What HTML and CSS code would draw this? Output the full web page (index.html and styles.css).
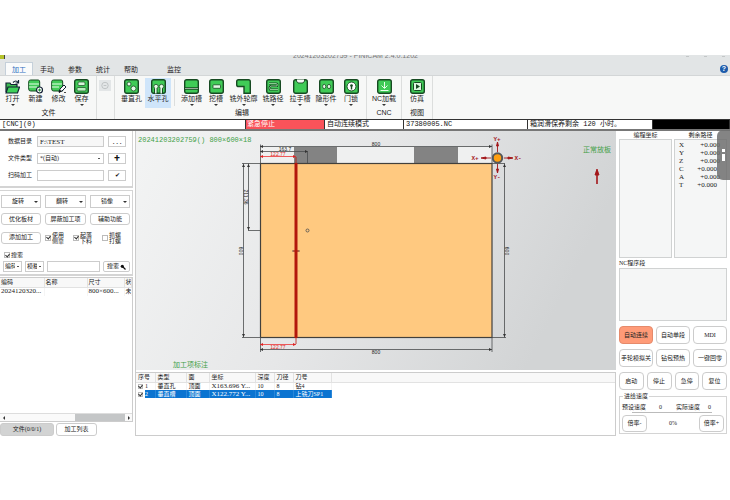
FILE: index.html
```html
<!DOCTYPE html>
<html lang="zh-CN">
<head>
<meta charset="utf-8">
<title>PINICAM</title>
<link rel="stylesheet" href="styles.css">
</head>
<body>
<div class="app">
  <header class="titlebar">
    <span class="logo"></span>
    <div class="title">20241203202759 - PINICAM 2.4.0.1202</div>
    <div class="window-marks"><i></i><i></i><i></i></div>
    <nav class="tabs">
      <a href="#" class="active">加工</a><a href="#">手动</a><a href="#">参数</a><a href="#">统计</a><a href="#">帮助</a><a href="#" class="far">监控</a>
      <button class="help" aria-label="帮助">?</button>
    </nav>
  </header>

  <section class="ribbon">
    <div class="group g-file">
      <div class="tools">
        <button><svg class="ic" viewBox="0 0 15 15"><path d="M1 13V4h4l1 1.500h6V8" fill="#3dbb52" stroke="#123" stroke-width="1.200"/><path d="M1 14l2-6h11.500l-2 6z" fill="#3fd05a" stroke="#123" stroke-width="1.200"/><path d="M8 3.500q3-3 5 0M13.500 1v3h-3" fill="none" stroke="#123" stroke-width="1.200"/></svg>打开<b></b></button>
        <button><svg class="ic" viewBox="0 0 15 15"><path d="M.7 2.500q0-1.500 2-1.500h7.500q1.500 0 1.500 2v9H2.700q-2 0-2-2z" fill="#42cb58" stroke="#174a22"/><path d="M1 5h10M1 8h8" stroke="#e8ffe9"/><circle cx="11.500" cy="11" r="3" fill="#fff" stroke="#123" stroke-width="1.200"/><path d="M10 11h3M11.500 9.500v3" stroke="#27913a"/></svg>新建</button>
        <button><svg class="ic" viewBox="0 0 15 15"><path d="M.7 2.500q0-1.500 2-1.500h7.500q1.500 0 1.500 2v9H2.700q-2 0-2-2z" fill="#42cb58" stroke="#174a22"/><path d="M1 5h10M1 8h7" stroke="#e8ffe9"/><path d="M8 13l1-3 4-4 2 2-4 4z" fill="#fff" stroke="#123"/><path d="M8 13.500l2-2M14 13v1" stroke="#111" stroke-width="1.500"/></svg>修改</button>
        <button><svg class="ic" viewBox="0 0 15 15"><rect class="tile" x=".7" y=".7" width="13.600" height="13.600" rx="2"/><rect x="4" y="3" width="7" height="3.500" rx="1" fill="#d9f7dc" stroke="#174a22" stroke-width=".7"/><rect x="3" y="8.500" width="9" height="3.500" rx="1" fill="#baf0c0" stroke="#174a22" stroke-width=".7"/></svg>保存<b></b></button>
      </div>
      <div class="caption">文件</div>
    </div>
    <div class="group g-ghost">
      <span class="ghost"><svg viewBox="0 0 12 12"><circle cx="6" cy="6" r="3.500" fill="none" stroke="#bcc1c2"/><path d="M4.500 6h3" stroke="#bcc1c2"/></svg></span>
    </div>
    <div class="group g-edit">
      <div class="tools">
        <button class="w27"><svg class="ic" viewBox="0 0 15 15"><rect class="tile" x=".7" y=".7" width="13.600" height="13.600" rx="2"/><circle class="hole" cx="5" cy="5" r="2"/><circle class="hole" cx="9.500" cy="9.500" r="2.500"/></svg>垂直孔</button>
        <button class="w26 chosen"><svg class="ic" viewBox="0 0 15 15"><rect class="tile" x=".7" y=".7" width="13.600" height="13.600" rx="2"/><circle class="hole" cx="5" cy="7.500" r="2.200"/><circle class="hole" cx="10.500" cy="7.500" r="2.200"/><path d="M3.500 9.500v5M6 9.500v5M9 9.500v5M11.500 9.500v5" stroke="#174a22"/><path d="M4.800 9v5.500M10.200 9v5.500" stroke="#fff" stroke-width="1.300"/></svg>水平孔</button>
        <span class="divider"></span>
        <button class="w25"><svg class="ic" viewBox="0 0 15 15"><rect class="tile" x=".7" y=".7" width="13.600" height="13.600" rx="2"/><path d="M1 9.500h13" stroke="#174a22" stroke-width="2.500"/><path d="M1 9.500h13" stroke="#9a9" stroke-width="1"/></svg>添加槽<b></b></button>
        <button class="w24"><svg class="ic" viewBox="0 0 15 15"><rect class="tile" x=".7" y=".7" width="13.600" height="13.600" rx="2"/><rect class="hole" x="4" y="5.800" width="7.500" height="3.500" rx=".5"/></svg>挖槽<b></b></button>
        <button class="w31"><svg class="ic" viewBox="0 0 15 15"><path class="tile" d="M2.500.7h10q1.800 0 1.800 2v11.600H8V7.500H2.500Q.7 7.500.7 6V2.500Q.7.700 2.500.7z"/></svg>铣外轮廓<b></b></button>
        <button class="w28"><svg class="ic" viewBox="0 0 15 15"><rect class="tile" x=".7" y=".7" width="13.600" height="13.600" rx="2"/><path d="M3 4.500h7q2 0 1 2.500H5q-2 1-1 3.500h8" fill="none" stroke="#174a22" stroke-width="2.200"/><path d="M3 4.500h7q2 0 1 2.500H5q-2 1-1 3.500h8" fill="none" stroke="#a8e8ae" stroke-width=".8"/></svg>铣路径<b></b></button>
        <button class="w26"><svg class="ic" viewBox="0 0 15 15"><rect class="tile" x=".7" y=".7" width="13.600" height="13.600" rx="2"/><path d="M3.500 0v2.500q1 0 1.500 1.500h5q.5-1.500 1.500-1.500V0z" fill="#f7f8f7" stroke="#174a22" stroke-width=".9"/></svg>拉手槽<b></b></button>
        <button class="w26"><svg class="ic" viewBox="0 0 15 15"><rect class="tile" x=".7" y=".7" width="13.600" height="13.600" rx="2"/><ellipse class="hole" cx="5.200" cy="7.500" rx="1.600" ry="2.200"/><ellipse class="hole" cx="10" cy="7.500" rx="1.600" ry="2.200"/></svg>隐形件<b></b></button>
        <button class="w24"><svg class="ic" viewBox="0 0 15 15"><rect class="tile" x=".7" y=".7" width="13.600" height="13.600" rx="2"/><circle cx="7.500" cy="7.500" r="4.500" fill="#fff" stroke="#174a22"/><circle cx="7.500" cy="6.500" r="1.300" fill="#174a22"/><path d="M7.500 6v4.500" stroke="#174a22" stroke-width="1.400"/></svg>门锁<b></b></button>
      </div>
      <div class="caption">编辑</div>
    </div>
    <div class="group g-cnc">
      <div class="tools"><button><svg class="ic" viewBox="0 0 15 15"><rect class="tile" x=".7" y=".7" width="13.600" height="13.600" rx="2"/><path d="M7.500 3v6M4.500 6.500l3 3 3-3M3.500 11.500h8" fill="none" stroke="#e7ffe9"/></svg>NC加载<b></b></button></div>
      <div class="caption">CNC</div>
    </div>
    <div class="group g-view">
      <div class="tools"><button><svg class="ic" viewBox="0 0 15 15"><rect class="tile" x=".7" y=".7" width="13.600" height="13.600" rx="2"/><rect x="3.500" y="3.500" width="8" height="8" rx="1" fill="#dcf8df" stroke="#174a22"/><path d="M6 5l4 2.500L6 10z" fill="#174a22"/></svg>仿真</button></div>
      <div class="caption">视图</div>
    </div>
  </section>

  <section class="status">
    <span>[CNC](0)</span><span class="alarm">紧急停止</span><span>自动连续模式</span><span>37380005.NC</span><span>箱润滑保养剩余 120 小时。</span><span class="black"></span>
  </section>

  <main class="main">
    <aside class="left">
      <form class="panel source">
        <label for="dir">数据目录</label><input id="dir" class="grey" value="F:\TEST"><button type="button" class="more" aria-label="浏览">. . .</button>
        <label for="kind">文件类型</label><select id="kind"><option>*(自动)</option></select><button type="button" aria-label="添加">✚</button>
        <label for="scan">扫码加工</label><input id="scan"><button type="button" aria-label="确认">✔</button>
      </form>
      <form class="panel actions">
        <div class="trio square"><button type="button">旋转<b></b></button><button type="button">翻转<b></b></button><button type="button">镜像<b></b></button></div>
        <div class="trio"><button type="button">优化板材</button><button type="button">屏蔽加工项</button><button type="button">辅助功能</button></div>
        <div class="extras">
          <button type="button">添加加工</button>
          <label><input type="checkbox" checked><span>使用<br>侧靠</span></label>
          <label><input type="checkbox" checked><span>起落<br>下料</span></label>
          <label><input type="checkbox"><span>抓螺<br>打螺</span></label>
        </div>
        <label class="find"><input type="checkbox" checked><span>搜索</span></label>
        <div class="search">
          <select aria-label="字段"><option>编码</option></select><select aria-label="方式"><option>模糊</option></select><input aria-label="搜索内容"><button type="button">搜索<svg viewBox="0 0 6 6"><circle cx="2.300" cy="2.300" r="1.600" fill="#111"/><path d="M3 3l2.500 2.500" stroke="#111" stroke-width="1.300"/></svg></button>
        </div>
      </form>
      <div class="files">
        <table>
          <thead><tr><th class="c1">编码</th><th class="c2">名称</th><th class="c3">尺寸</th><th>状</th></tr></thead>
          <tbody><tr><td class="num">2024120320...</td><td></td><td class="num">800×600...</td><td>未</td></tr></tbody>
        </table>
        <div class="scroll"><i class="prev"></i><span></span><i class="next"></i></div>
      </div>
      <div class="bottom-tabs"><button class="on">文件(0/0/1)</button><button>加工列表</button></div>
    </aside>

    <section class="center">
      <svg class="drawing" viewBox="136 131 480 239" role="img" aria-label="板材图">
        <defs>
          <linearGradient id="bg" x1="0" y1="0" x2="1" y2=".25"><stop offset="0" stop-color="#f3f4f4"/><stop offset=".5" stop-color="#e6e7e8"/><stop offset="1" stop-color="#d2d4d5"/></linearGradient>
        </defs>
        <rect x="136" y="131" width="480" height="239" fill="url(#bg)"/>
        <rect x="260" y="147" width="232" height="16" fill="#eff0f0"/>
        <rect x="294" y="147" width="43" height="16" fill="#838383"/>
        <rect x="414" y="147" width="44" height="16" fill="#838383"/>
        <rect x="260.500" y="163.500" width="231.500" height="174" fill="#ffc980" stroke="#42403c" stroke-width="1.200"/>
        <g stroke="#4a4c4e" stroke-width=".8" fill="none">
          <path d="M260.500 144.500V163M260 146.500h232M492 144.500V163M260 151.500h47.500V163"/>
          <path d="M260 163.500H242M243.500 163.500v174M242 337.500h18M248.500 163.500v67M248 230.500h12"/>
          <path d="M492 163.500h13M504.500 163.500v174M492 337.500h14M260.500 337v15M260 349.500h232M492 337v15"/>
          <circle cx="307.500" cy="230.500" r="1.500"/><path d="M292 251h8"/>
        </g>
        <path fill="#333" d="M260 146.500l3-1.500v3zM492 146.500l-3-1.500v3zM260 151.500l3-1.500v3zM308 151.500l-3-1.500v3zM243.500 164l-1.500 3h3zM243.500 337l-1.500-3h3zM248.500 164l-1.500 3h3zM248.500 230l-1.500-3h3zM504.500 164l-1.500 3h3zM504.500 337l-1.500-3h3zM260 349.500l3-1.500v3zM492 349.500l-3-1.500v3z"/>
        <path d="M296 157v187M293 251h6" stroke="#b3170c" stroke-width=".8"/>
        <path d="M296 163v175" stroke="#b3170c" stroke-width="3"/>
        <path d="M260 156.500h36M260 344.500h36" stroke="#e33" stroke-width=".8"/>
        <path d="M260 156.500l3-1.500v3zM296 156.500l-3-1.500v3zM260 344.500l3-1.500v3zM296 344.500l-3-1.500v3z" fill="#d22"/>
        <g class="dim">
          <text x="376" y="146">800</text><text x="376" y="354">800</text><text x="285" y="151">163.7</text>
          <text x="278" y="156" class="red">122.77</text><text x="278" y="349" class="red">122.77</text>
          <text transform="translate(244 197) rotate(90)">211.36</text>
          <text transform="translate(239 251) rotate(90)">600</text>
          <text transform="translate(505 251) rotate(90)">600</text>
        </g>
        <circle cx="497.500" cy="158" r="4.700" fill="#ff9f10" stroke="#55585a" stroke-width="2"/>
        <g stroke="#a3161a" fill="#a3161a" stroke-width=".9">
          <path d="M497.500 152v-8M497.500 142l-1 4h2zM497.500 164v8M497.500 173l-1-4h2zM491 158h-8M481 158l5-1v2zM504 158h8M513 158l-5-1v2z"/>
          <path d="M597 184v-13" stroke-width="1.600"/><path d="M597 169l-2 6h4z"/>
        </g>
        <g class="axis"><text x="497" y="141">Y+</text><text x="497" y="179">Y-</text><text x="475" y="160">X+</text><text x="518" y="160">X-</text></g>
        <text class="green name" x="138" y="142">20241203202759() 800×600×18</text>
        <text class="green note" x="583" y="152">正常放板</text>
        <text class="green note" x="173" y="367">加工项标注</text>
      </svg>
      <div class="items">
        <table>
          <thead><tr><th class="k1">序号</th><th class="k2">类型</th><th class="k3">面</th><th class="k4">坐标</th><th class="k5">深度</th><th class="k6">刀径</th><th class="k7">刀号</th><th></th></tr></thead>
          <tbody>
            <tr><td><label><input type="checkbox" checked>1</label></td><td>垂直孔</td><td>顶面</td><td class="num">X163.696 Y...</td><td>10</td><td>8</td><td>钻4</td><td></td></tr>
            <tr class="sel"><td><label><input type="checkbox" checked>2</label></td><td>垂直槽</td><td>顶面</td><td class="num">X122.772 Y...</td><td>10</td><td>8</td><td>上铣刀SP1</td><td></td></tr>
          </tbody>
        </table>
      </div>
    </section>

    <aside class="right">
      <div class="coords">
        <section><h2>编程坐标</h2><div class="well"></div></section>
        <section><h2>剩余路径</h2><dl class="well">
          <dt>X</dt><dd>+0.000</dd><dt>Y</dt><dd>+0.000</dd><dt>Z</dt><dd>+0.000</dd><dt>C</dt><dd class="in">+0.000</dd><dt>A</dt><dd>+0.000</dd><dt>T</dt><dd class="in">+0.000</dd></dl></section>
      </div>
      <h2 class="nc">NC程序段</h2>
      <div class="well program"></div>
      <div class="keys three"><button class="hot">自动连续</button><button>自动单段</button><button>MDI</button><button>手轮模拟关</button><button>钻包预热</button><button>一键回零</button></div>
      <div class="keys four"><button>启动</button><button>停止</button><button>急停</button><button>复位</button></div>
      <fieldset>
        <legend>进给速度</legend>
        <div class="speeds"><span>预设速度</span><span>0</span><span>实际速度</span><span>0</span></div>
        <div class="track"></div>
        <div class="rate"><button>倍率-</button><span>0%</span><button>倍率+</button></div>
      </fieldset>
      <div class="drawer"><i></i><i class="stem"></i></div>
    </aside>
  </main>
</div>
</body>
</html>
```

FILE: styles.css
```css
* { box-sizing: border-box; }
body {
  margin: 0;
  padding-top: 55px;
  background: #fff;
  color: #222;
  font: 7px/8px "Liberation Sans", "Noto Sans CJK SC", sans-serif;
}
button, input, select {
  margin: 0;
  padding: 0;
  font: inherit;
  color: inherit;
  background: #fff;
  border: 1px solid #ccc;
  border-radius: 0;
  min-width: 0;
}
a { color: inherit; text-decoration: none; }
b {
  display: inline-block;
  border: 2px solid transparent;
  border-top-color: #333;
  border-bottom: 0;
}
h2 { margin: 0; font-size: 6px; line-height: 8px; font-weight: normal; text-align: center; }

/* title and tabs */
.titlebar { position: relative; height: 21px; overflow: hidden; background: #e2e5e6; border-bottom: 1px solid #d3d6d7; }
.logo { position: absolute; left: 0; top: 0; width: 5px; height: 4px; background: #b4c22a; border-right: 1px solid #444; }
.title { height: 7px; margin-top: -3px; padding-left: 293px; color: #777; line-height: 7px; white-space: nowrap; }
.window-marks { position: absolute; right: 5px; top: 1px; display: flex; gap: 15px; }
.window-marks i { width: 3px; height: 1px; background: #c3c6c7; }
.tabs { display: flex; align-items: stretch; height: 14px; margin-top: 3px; padding-left: 5px; }
.tabs a { width: 28px; line-height: 13px; text-align: center; border: 1px solid transparent; border-bottom: 0; }
.tabs .active { color: #2f6fc0; background: #fafbfb; border-color: #c5d0da; }
.tabs .far { margin-left: 15px; }
.tabs .help { width: 8px; height: 8px; margin: 3px 2px 0 auto; border: 0; border-radius: 50%; color: #fff; background: #1d5cab; font-weight: bold; line-height: 8px; }

/* ribbon */
.ribbon { display: flex; height: 43px; background: #f7f8f7; }
.group { position: relative; border-right: 1px solid #dcdedd; }
.tools { display: flex; height: 33px; padding-top: 2px; }
.tools button { display: flex; flex-direction: column; align-items: center; flex: none; border: 0; background: none; white-space: nowrap; line-height: 9px; height: 30px; }
.tools b { margin-top: 1px; }
.ic { display: block; width: 15px; height: 15px; margin-top: 1px; flex: none; }
.tile { fill: #40cb57; stroke: #174a22; stroke-width: 1.4px; }
.hole { fill: #e4fae6; stroke: #174a22; stroke-width: .8px; }
.caption { text-align: center; line-height: 8px; }
.g-file { width: 97px; padding-left: 1px; }
.g-file button { width: 23px; }
.g-ghost { width: 18px; padding: 4px 2px; }
.ghost { display: block; width: 12px; height: 11px; background: #e3e6e7; }
.ghost svg { display: block; width: 12px; height: 11px; }
.g-edit { width: 252px; padding-left: 3px; }
.g-cnc { width: 35px; }
.g-view { width: 31px; }
.g-cnc button, .g-view button { width: 100%; }
.tools .chosen { background: #cfe5fa; }
.divider { width: 1px; height: 27px; margin: 1px 4px 0 3px; background: #dcdedd; }
.w24 { width: 24px; } .w25 { width: 25px; } .w26 { width: 26px; } .w27 { width: 27px; } .w28 { width: 28px; } .w31 { width: 31px; }

/* status line */
.status {
  display: grid;
  grid-template-columns: 246fr 79fr 79fr 124fr 125fr 77fr;
  height: 12px;
  background: #fff;
  border: 1px solid #333;
  border-width: 1px 0 2px;
  border-bottom-color: #777;
  font-family: "Liberation Mono", "Noto Sans CJK SC", monospace;
  color: #111;
}
.status span { padding-left: 2px; border-right: 1px solid #333; line-height: 9px; white-space: nowrap; overflow: hidden; }
.status .alarm { color: #fff; background: #f9535a; padding-left: 1px; }
.status .black { background: #000; }

/* work area */
.main { display: grid; grid-template-columns: 136px 1fr 114px; font: 6px/7px "Liberation Serif", "Noto Sans CJK SC", serif; }
.left { padding-right: 2px; border-right: 1px solid #ccc; }
.panel { border: 2px solid #d4d4d4; border-width: 0 1px 2px 0; }
.source { display: grid; grid-template-columns: 25px 1fr 18px; gap: 6px 4px; padding: 5px 6px 6px 8px; height: 57px; align-content: start; }
.source > * { height: 11px; }
.source label { line-height: 11px; }
.source input, .source select { padding: 0 2px; font-size: 7px; }
.source select { font-size: 6px; }
.source .grey { background: #f7f7f7; }
.source button { color: #111; line-height: 9px; }
.source .more { font-size: 7px; font-weight: bold; line-height: 6px; }
select { appearance: none; background: #fff conic-gradient(#555 0 0) right 3px center / 2px 1px no-repeat; }
.actions { height: 86px; margin-top: 2px; padding: 4px 2px 0 1px; border-top: 1px solid #d4d4d4; }
.trio { display: grid; grid-template-columns: 40px 41px 40px; justify-content: space-between; margin-bottom: 5px; }
.trio button, .extras button { height: 12px; border-radius: 3px; white-space: nowrap; }
.trio.square button { display: flex; align-items: center; justify-content: space-between; height: 13px; padding: 0 2px 0 10px; border-radius: 0; }
.extras { display: grid; grid-template-columns: 40px 24px 25px 25px; gap: 4px; align-items: center; height: 15px; }
.extras label, .find, .items label { display: flex; align-items: center; gap: 1px; }
.extras span { line-height: 6px; }
input[type="checkbox"] { appearance: none; flex: none; display: grid; place-items: center; width: 6px; height: 6px; border-color: #bbb; }
input[type="checkbox"]:checked::after { content: ""; width: 2px; height: 3px; margin-top: -1px; border: solid #333; border-width: 0 1px 1px 0; transform: rotate(40deg); }
.find { height: 8px; margin: 6px 0 2px 3px; }
.search { display: grid; grid-template-columns: 19px 19px 1fr 27px; gap: 3px; padding-left: 2px; }
.search > * { height: 11px; }
.search select { padding: 0 6px 0 1px; overflow: hidden; text-overflow: clip; background-position: right 2px center; }
.search button { display: flex; align-items: center; justify-content: center; gap: 1px; border-radius: 2px; }
.search svg { width: 6px; height: 6px; }

table { width: 100%; border-collapse: collapse; table-layout: fixed; }
th, td { padding: 0 2px; font-weight: normal; text-align: left; white-space: nowrap; overflow: hidden; border-right: 1px solid #e2e2e2; }
th { background: #f8f8f8; border-bottom: 1px solid #e2e2e2; }
.num { font-size: 7px; }
.files { display: flex; flex-direction: column; justify-content: space-between; height: 145px; margin-top: 1px; border: 1px solid #ccc; border-left: 0; }
.files th, .files td { height: 9px; padding: 0 1px; }
.files td { border-right-color: #f5f5f5; }
.c1 { width: 44px; } .c2 { width: 43px; } .c3 { width: 37px; }
.scroll { display: grid; grid-template-columns: 7px 1fr 50px 7px; height: 8px; background: #fafafa; border-top: 1px solid #ddd; align-items: center; }
.scroll span { grid-column: 3; height: 7px; background: #c4c6c7; }
.scroll .next { grid-column: 4; justify-self: center; border: 2px solid transparent; border-left: 2px solid #333; border-right: 0; }
.scroll .prev { grid-column: 1; justify-self: center; border: 2px solid transparent; border-right: 2px solid #333; border-left: 0; }
.bottom-tabs { display: flex; gap: 2px; margin-top: 1px; }
.bottom-tabs button { width: 41px; height: 13px; border-radius: 3px; }
.bottom-tabs .on { width: 54px; background: #d2d3d3; }

.center { display: flex; flex-direction: column; }
.drawing { display: block; width: 100%; }
.dim text { font: 5px "Liberation Sans", sans-serif; text-anchor: middle; fill: #222; }
.dim .red { fill: #e02a2a; }
.axis text { font: bold 6px "Liberation Mono", monospace; text-anchor: middle; fill: #a3161a; }
.green { fill: #43a047; }
.name { font: 7px "Liberation Mono", "Noto Sans CJK SC", monospace; }
.note { font: 7px "Noto Sans CJK SC", sans-serif; }
.items { flex: 1; margin-top: 2px; border: 1px solid #ccc; border-left: 0; }
.items th { height: 9px; }
.items td { height: 8px; line-height: 7px; border-right-color: #f3f3f3; }
.items th:last-child, .items td:last-child { border-right: 0; }
.items input { width: 5px; height: 5px; }
.items label { gap: 2px; }
.k1 { width: 19px; } .k2 { width: 31px; } .k3 { width: 23px; } .k4 { width: 46px; } .k5 { width: 19px; } .k6 { width: 19px; } .k7 { width: 38px; }
.sel td { color: #fff; background: #0b74d1; border-right-color: #2a86d8; }
.sel td:first-child { background: linear-gradient(90deg, #fff 9px, #0b74d1 9px); }
.sel td:last-child { background: none; }

.right { position: relative; padding: 0 3px; }
.coords { display: grid; grid-template-columns: 1fr 1fr; gap: 2px; }
.well { margin: 0; background: #f5f6f6; border: 1px solid #d0d2d2; }
.coords .well { height: 119px; }
dl.well { display: grid; grid-template-columns: 1fr auto; align-content: start; padding: 1px 6px 0 4px; font-size: 7px; line-height: 8px; }
dd { margin: 0; text-align: right; }
dd.in { padding-right: 3px; }
.right .nc { text-align: left; margin: 1px 0; }
.program { height: 53px; }
.keys { display: grid; gap: 5px 3px; margin-top: 5px; }
.three { grid-template-columns: repeat(3, 1fr); }
.four { grid-template-columns: repeat(4, 1fr); }
.keys button, .rate button { height: 18px; border-radius: 4px; white-space: nowrap; }
.keys .hot { background: #ff9b78; border-color: #e58a6b; }
fieldset { margin: 3px 0 0; padding: 3px 2px 1px; border: 1px solid #d4d4d4; min-width: 0; }
legend { padding: 0 1px; margin-left: 1px; line-height: 7px; }
.speeds { display: grid; grid-template-columns: 37px 17px 32px 1fr; line-height: 8px; }
.track { height: 1px; margin: 1px 12px 2px 10px; background: #bbb; }
.rate { display: grid; grid-template-columns: 25px 1fr 25px; align-items: center; text-align: center; }
.rate button { height: 17px; }
.drawer { position: absolute; right: 0; top: -1px; width: 13px; height: 50px; display: flex; flex-direction: column; align-items: center; justify-content: center; gap: 2px; border-radius: 6px 0 0 6px; background: rgba(110, 110, 110, .85); }
.drawer i { width: 3px; height: 3px; background: #fff; }
.drawer .stem { height: 7px; }
```
